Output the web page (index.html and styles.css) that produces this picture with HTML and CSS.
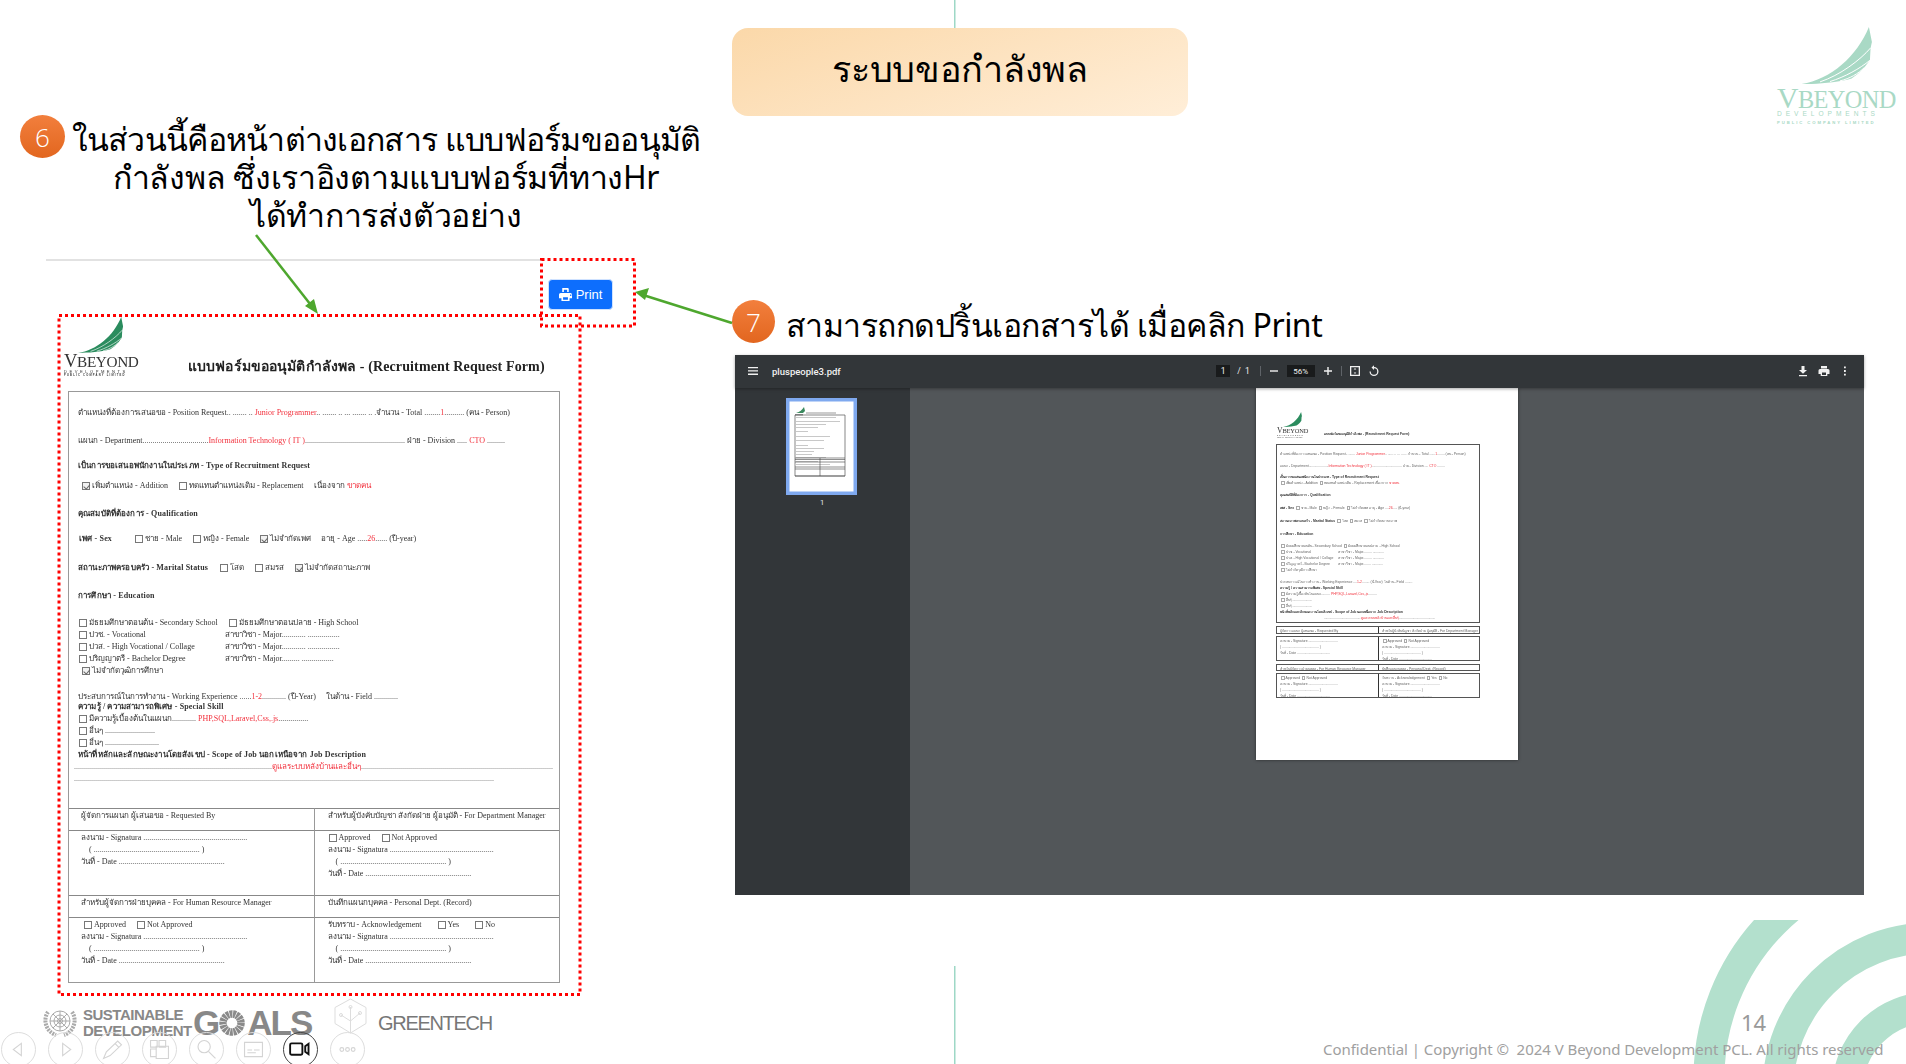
FILE: index.html
```html
<!DOCTYPE html>
<html lang="th">
<head>
<meta charset="utf-8">
<title>ระบบขอกำลังพล</title>
<link rel="stylesheet" href="styles.css">
</head>
<body>
<main class="slide">
  <svg class="arcs" viewBox="0 0 1906 1064" aria-hidden="true">
    <defs><clipPath id="arcclip"><rect x="1600" y="920" width="306" height="144"/></clipPath></defs>
    <g clip-path="url(#arcclip)" fill="none" stroke="#b3e0cd" stroke-width="31">
      <circle cx="1930" cy="1078" r="221"/>
      <circle cx="1930" cy="1090" r="152"/>
      <circle cx="1930" cy="1090" r="82.500"/>
    </g>
    <rect x="954" y="0" width="1.500" height="28" fill="#9ed8c6"/>
    <rect x="954" y="966" width="1.500" height="98" fill="#9ed8c6"/>
  </svg>

  <h1 class="title">ระบบขอกำลังพล</h1>

  <div class="logo logo-corner">
    <svg class="wing" viewBox="150 50 216 172"><path d="M150 222C240 210 320 140 357 50L366 95L362 113L360 150L343 172L325 190L305 205C260 218 200 222 150 222Z"/><path class="feather" d="M210 215C270 195 330 150 362 113M240 214C285 200 330 175 360 150M270 212C300 205 325 190 343 172"/></svg>
    <div class="logo-name">V<span>BEYOND</span></div>
    <div class="logo-dev">DEVELOPMENTS</div>
    <div class="logo-pcl">PUBLIC COMPANY LIMITED</div>
  </div>

  <div class="badge badge-6">6</div>
  <p class="note note-6"><span class="l1">ในส่วนนี้คือหน้าต่างเอกสาร แบบฟอร์มขออนุมัติ</span><span class="l2">กำลังพล ซึ่งเราอิงตามแบบฟอร์มที่ทางHr</span><span class="l3">ได้ทำการส่งตัวอย่าง</span></p>

  <div class="badge badge-7">7</div>
  <p class="note note-7">สามารถกดปริ้นเอกสารได้ เมื่อคลิก Print</p>

  <div class="rule"></div>
  <button class="print-btn">
    <svg viewBox="0 0 512 512"><path fill="#fff" d="M128 0h228l28 28v132h-64V64H192v96h-64V0zM64 192h384a64 64 0 0 1 64 64v144h-96v112H96V400H0V256a64 64 0 0 1 64-64zm96 208v64h192v-96H160v32zm272-116a28 28 0 1 0 0-1z"/></svg>
    <span>Print</span>
  </button>

  <section class="doc">
    <header class="doc-head">
      <div class="logo logo-form">
        <svg class="wing" viewBox="150 50 216 172"><path d="M150 222C240 210 320 140 357 50L366 95L362 113L360 150L343 172L325 190L305 205C260 218 200 222 150 222Z"/><path class="feather" d="M210 215C270 195 330 150 362 113M240 214C285 200 330 175 360 150M270 212C300 205 325 190 343 172"/></svg>
        <div class="logo-name">V<span>BEYOND</span></div>
        <div class="logo-dev">DEVELOPMENTS</div>
        <div class="logo-pcl">PUBLIC COMPANY LIMITED</div>
      </div>
      <h2 class="doc-title">แบบฟอร์มขออนุมัติกำลังพล - (Recruitment Request Form)</h2>
    </header>
    <div class="sheet">
      <div class="fields">
        <div class="row">ตำแหน่งที่ต้องการเสนอขอ - Position Request.. ....... .. <em>Junior Programmer</em>.. ....... .. ... ....... .. .จำนวน - Total ........<em>1</em>.......... (คน - Person)</div>
        <div class="row gap-16">แผนก - Department.................................<em>Information Technology ( IT )</em>.................................................. ฝ่าย - Division ..... <em>CTO</em> .........</div>
        <div class="row gap-13"><b>เป็นการขอเสนอพนักงานในประเภท - Type of Recruitment Request</b></div>
        <div class="row gap-8 indent"><i class="cb on"></i>เพิ่มตำแหน่ง - Addition <i class="cb wide"></i>ทดแทนตำแหน่งเดิม - Replacement <span class="sp"></span>เนื่องจาก <em>ขาดคน</em></div>
        <div class="row gap-16"><b>คุณสมบัติที่ต้องการ - Qualification</b></div>
        <div class="row gap-13"><b class="sex">เพศ - Sex</b><i class="cb"></i>ชาย - Male <i class="cb wide"></i>หญิง - Female <i class="cb wide on"></i>ไม่จำกัดเพศ <span class="sp"></span>อายุ - Age .....<em>26</em>...... (ปี-year)</div>
        <div class="row gap-17"><b class="marital">สถานะภาพครอบครัว - Marital Status</b><i class="cb wide"></i>โสด <i class="cb wide"></i>สมรส <i class="cb wide on"></i>ไม่จำกัดสถานะภาพ</div>
        <div class="row gap-16"><b>การศึกษา - Education</b></div>
        <div class="row gap-15 tight"><i class="cb"></i>มัธยมศึกษาตอนต้น - Secondary School <i class="cb wide"></i>มัธยมศึกษาตอนปลาย - High School</div>
        <div class="row tight edu"><span class="edu-a"><i class="cb"></i>ปวช. - Vocational</span>สาขาวิชา - Major............ ................</div>
        <div class="row tight edu"><span class="edu-a"><i class="cb"></i>ปวส. - High Vocational / Collage</span>สาขาวิชา - Major............ ................</div>
        <div class="row tight edu"><span class="edu-a"><i class="cb"></i>ปริญญาตรี - Bachelor Degree</span>สาขาวิชา - Major......... ................</div>
        <div class="row indent"><i class="cb on"></i>ไม่จำกัดวุฒิการศึกษา</div>
        <div class="row gap-14">ประสบการณ์ในการทำงาน - Working Experience ......<em>1-2</em>............ (ปี-Year) <span class="sp"></span>ในด้าน - Field ............</div>
        <div class="row pull-2"><b>ความรู้ / ความสามารถพิเศษ - Special Skill</b></div>
        <div class="row tight"><i class="cb"></i>มีความรู้เบื้องต้นในแผนก............ <em>PHP,SQL,Laravel,Css,.js</em>...............</div>
        <div class="row tight"><i class="cb"></i>อื่นๆ .........................</div>
        <div class="row tight"><i class="cb"></i>อื่นๆ ...........................</div>
        <div class="row"><b>หน้าที่หลักและลักษณะงานโดยสังเขป - Scope of Job นอกเหนือจาก Job Description</b></div>
        <div class="row dots">...................................................................................................<em>ดูแลระบบหลังบ้านและอื่นๆ</em>................................................................................................</div>
        <div class="row dots">..................................................................................................................................................................................................................</div>
      </div>
      <div class="signs">
        <div class="cell head"><span>ผู้จัดการแผนก ผู้เสนอขอ - Requested By</span></div>
        <div class="cell head right"><span>สำหรับผู้บังคับบัญชา สังกัดฝ่าย ผู้อนุมัติ - For Department Manager</span></div>
        <div class="cell body">
          <div>ลงนาม - Signatura ....................................................</div>
          <div class="paren">( ..................................................... )</div>
          <div>วันที่ - Date .....................................................</div>
        </div>
        <div class="cell body right">
          <div><i class="cb"></i>Approved <i class="cb wide"></i>Not Approved</div>
          <div>ลงนาม - Signatura ....................................................</div>
          <div class="paren">( ..................................................... )</div>
          <div>วันที่ - Date .....................................................</div>
        </div>
        <div class="cell head"><span>สำหรับผู้จัดการฝ่ายบุคคล - For Human Resource Manager</span></div>
        <div class="cell head right"><span>บันทึกแผนกบุคคล - Personal Dept. (Record)</span></div>
        <div class="cell body">
          <div class="opts"><i class="cb"></i>Approved <i class="cb wide"></i>Not Approved</div>
          <div>ลงนาม - Signatura ....................................................</div>
          <div class="paren">( ..................................................... )</div>
          <div>วันที่ - Date .....................................................</div>
        </div>
        <div class="cell body right">
          <div>รับทราบ - Acknowledgement <i class="cb wider"></i>Yes <i class="cb wider"></i>No</div>
          <div>ลงนาม - Signatura ....................................................</div>
          <div class="paren">( ..................................................... )</div>
          <div>วันที่ - Date .....................................................</div>
        </div>
      </div>
    </div>
  </section>

  <section class="viewer">
    <div class="vbar">
      <div class="vleft">
        <svg class="vi" viewBox="0 0 12 12"><path d="M1 2h10v1.300H1zM1 5.300h10v1.300H1zM1 8.600h10v1.300H1z"/></svg>
        <span class="vname">pluspeople3.pdf</span>
      </div>
      <div class="vcenter">
        <span class="vbox vpage">1</span><span class="vof">/ &nbsp;1</span>
        <i class="vsep"></i>
        <svg class="vi" viewBox="0 0 12 12"><path d="M2 5.300h8v1.400H2z"/></svg>
        <span class="vbox vzoom">56%</span>
        <svg class="vi" viewBox="0 0 12 12"><path d="M2 5.300h3.300V2h1.400v3.300H10v1.400H6.700V10H5.300V6.700H2z"/></svg>
        <i class="vsep"></i>
        <svg class="vi" viewBox="0 0 12 12"><path fill-rule="evenodd" d="M1 1h10v10H1zM2.300 2.300v7.400h7.400V2.300zM6 3L7.300 4.600H4.700zM6 9L4.700 7.400h2.600z"/></svg>
        <svg class="vi" viewBox="0 0 12 12"><path fill-rule="evenodd" d="M6 2a4.500 4.500 0 1 1-4.500 4.500h1.300A3.200 3.200 0 1 0 6 3.300V5L3.500 2.600 6 .3z"/></svg>
      </div>
      <div class="vright">
        <svg class="vi" viewBox="0 0 12 12"><path d="M4.500 1h3v4H10L6 8.800 2 5h2.500zM2 10h8v1.300H2z"/></svg>
        <svg class="vi" viewBox="0 0 12 12"><path fill-rule="evenodd" d="M3 1h6v2.500H3zM2 4h8a1.500 1.500 0 0 1 1.500 1.500V9H9.300v2H2.700V9H.5V5.500A1.500 1.500 0 0 1 2 4zM4 7.500V10h4V7.500z"/></svg>
        <svg class="vi" viewBox="0 0 12 12"><path d="M5 1.500h1.800v1.800H5zM5 5.100h1.800v1.800H5zM5 8.700h1.800v1.800H5z"/></svg>
      </div>
    </div>
    <div class="vbody">
      <aside class="vside">
        <svg class="thumb" viewBox="0 0 71 97" aria-hidden="true">
          <rect x="0" y="0" width="71" height="97" fill="#7fa9ef"/>
          <rect x="3.500" y="3.500" width="64" height="90" fill="#fff"/>
          <path d="M10 15c4-1 6-3 8-6l1 4-2 2z" fill="#3b8a5f"/>
          <path d="M9 16h8v1.500H9zM20 14.500h30v1H20z" fill="#999"/>
          <path d="M9 17v61h50V17z" fill="none" stroke="#555" stroke-width=".7"/>
          <g fill="#bbb">
            <rect x="10" y="19" width="40" height=".8"/><rect x="10" y="23" width="44" height=".8"/><rect x="10" y="26" width="30" height=".8"/><rect x="10" y="29" width="22" height=".8"/><rect x="10" y="33" width="12" height=".8"/><rect x="10" y="38" width="34" height=".8"/><rect x="10" y="42" width="28" height=".8"/><rect x="10" y="47" width="12" height=".8"/><rect x="10" y="50" width="28" height=".8"/><rect x="10" y="53" width="18" height=".8"/><rect x="10" y="56" width="16" height=".8"/><rect x="10" y="59" width="30" height=".8"/><rect x="10" y="63" width="22" height=".8"/><rect x="10" y="66" width="34" height=".8"/>
          </g>
          <path d="M9 60h50M9 61.500h50M9 64h50M9 69h50M9 71h50M9 78h50M34 60v18" stroke="#444" stroke-width=".6" fill="none"/>
        </svg>
        <span class="thumb-num">1</span>
      </aside>
      <div class="vmain">
        <article class="page">
          <header class="mini-head">
            <div class="logo logo-mini">
              <svg class="wing" viewBox="150 50 216 172"><path d="M150 222C240 210 320 140 357 50L366 95L362 113L360 150L343 172L325 190L305 205C260 218 200 222 150 222Z"/></svg>
              <div class="logo-name">V<span>BEYOND</span></div>
              <div class="logo-dev">DEVELOPMENTS</div>
              <div class="logo-pcl">PUBLIC COMPANY LIMITED</div>
            </div>
            <span class="mini-title">แบบฟอร์มขออนุมัติกำลังพล - (Recruitment Request Form)</span>
          </header>
          <div class="mini-sheet">
            <div class="m">ตำแหน่งที่ต้องการเสนอขอ - Position Request.. ....... <em>Junior Programmer</em>.. ...... .. ... ..... . จำนวน - Total ......<em>1</em>........ (คน - Person)</div>
            <div class="m mg-6">แผนก - Department.....................<em>Information Technology ( IT )</em>................................ ฝ่าย - Division .... <em>CTO</em> ........</div>
            <div class="m mg-5"><b>เป็นการขอเสนอพนักงานในประเภท - Type of Recruitment Request</b></div>
            <div class="m mg-1"><i class="mcb"></i>เพิ่มตำแหน่ง - Addition <i class="mcb"></i>ทดแทนตำแหน่งเดิม - Replacement เนื่องจาก <em>ขาดคน</em></div>
            <div class="m mg-6"><b>คุณสมบัติที่ต้องการ - Qualification</b></div>
            <div class="m mg-7"><b>เพศ - Sex</b> <i class="mcb"></i>ชาย - Male <i class="mcb"></i>หญิง - Female <i class="mcb"></i>ไม่จำกัดเพศ อายุ - Age ....<em>26</em>..... (ปี-year)</div>
            <div class="m mg-7"><b>สถานะภาพครอบครัว - Marital Status</b> <i class="mcb"></i>โสด <i class="mcb"></i>สมรส <i class="mcb"></i>ไม่จำกัดสถานะภาพ</div>
            <div class="m mg-7"><b>การศึกษา - Education</b></div>
            <div class="m mg-6"><i class="mcb"></i>มัธยมศึกษาตอนต้น - Secondary School <i class="mcb"></i>มัธยมศึกษาตอนปลาย - High School</div>
            <div class="m medu"><span><i class="mcb"></i>ปวช. - Vocational</span>สาขาวิชา - Major......... ............</div>
            <div class="m medu"><span><i class="mcb"></i>ปวส. - High Vocational / Collage</span>สาขาวิชา - Major......... ............</div>
            <div class="m medu"><span><i class="mcb"></i>ปริญญาตรี - Bachelor Degree</span>สาขาวิชา - Major........ ............</div>
            <div class="m"><i class="mcb"></i>ไม่จำกัดวุฒิการศึกษา</div>
            <div class="m mg-6">ประสบการณ์ในการทำงาน - Working Experience ....<em>1-2</em>........ (ปี-Year) ในด้าน - Field ........</div>
            <div class="m"><b>ความรู้ / ความสามารถพิเศษ - Special Skill</b></div>
            <div class="m"><i class="mcb"></i>มีความรู้เบื้องต้นในแผนก.......... <em>PHP,SQL,Laravel,Css,.js</em>.........</div>
            <div class="m"><i class="mcb"></i>อื่นๆ .....................</div>
            <div class="m"><i class="mcb"></i>อื่นๆ .....................</div>
            <div class="m"><b>หน้าที่หลักและลักษณะงานโดยสังเขป - Scope of Job นอกเหนือจาก Job Description</b></div>
            <div class="m mcenter">.......................................<em>ดูแลระบบหลังบ้านและอื่นๆ</em>.......................................</div>
          </div>
          <div class="mini-grid mh-8">
            <div class="mc">ผู้จัดการแผนก ผู้เสนอขอ - Requested By</div>
            <div class="mc">สำหรับผู้บังคับบัญชา สังกัดฝ่าย ผู้อนุมัติ - For Department Manager</div>
          </div>
          <div class="mini-grid mh-25">
            <div class="mc">ลงนาม - Signature ...............................<br>( ....................................... )<br>วันที่ - Date ...................................</div>
            <div class="mc"><i class="mcb"></i>Approved <i class="mcb"></i>Not Approved<br>ลงนาม - Signature ...............................<br>( ....................................... )<br>วันที่ - Date ...................................</div>
          </div>
          <div class="mini-grid mh-7">
            <div class="mc">สำหรับผู้จัดการฝ่ายบุคคล - For Human Resource Manager</div>
            <div class="mc">บันทึกแผนกบุคคล - Personal Dept. (Record)</div>
          </div>
          <div class="mini-grid mh-25">
            <div class="mc"><i class="mcb"></i>Approved <i class="mcb"></i>Not Approved<br>ลงนาม - Signature ...............................<br>( ....................................... )<br>วันที่ - Date ...................................</div>
            <div class="mc">รับทราบ - Acknowledgement <i class="mcb"></i>Yes <i class="mcb"></i>No<br>ลงนาม - Signature ...............................<br>( ....................................... )<br>วันที่ - Date ...................................</div>
          </div>
        </article>
      </div>
    </div>
  </section>

  <svg class="marks" viewBox="0 0 1906 1064" aria-hidden="true">
    <g fill="none" stroke="#f00" stroke-width="3" stroke-dasharray="3 3">
      <rect x="59" y="315.500" width="521" height="679"/>
      <rect x="541.500" y="259.500" width="93" height="66.500"/>
    </g>
    <g stroke="#4ea72e" stroke-width="2.500" fill="#4ea72e">
      <path d="M256 235L314 309" fill="none"/>
      <path d="M318 314L305 306L314 299Z" stroke="none"/>
      <path d="M732 323L643 295" fill="none"/>
      <path d="M635 292L649 288L645 300Z" stroke="none"/>
    </g>
  </svg>

  <footer class="brands">
    <svg class="un" viewBox="0 0 36 30" aria-hidden="true">
      <g fill="none" stroke="#aaa">
        <circle cx="18" cy="14" r="10"/><circle cx="18" cy="14" r="6"/><circle cx="18" cy="14" r="2.500"/>
        <path d="M8 14h20M18 4v20M11 7l14 14M25 7L11 21"/>
        <path d="M6 5C1 12 3 24 14 28M30 5c5 7 3 19-8 23" stroke-width="4" stroke-dasharray="2 1"/>
      </g>
    </svg>
    <div class="sdg"><span>SUSTAINABLE</span><span>DEVELOPMENT</span></div>
    <div class="goals">G<svg class="wheel" viewBox="0 0 26 26" aria-hidden="true"><circle cx="13" cy="13" r="9" fill="none" stroke="#8a8a8a" stroke-width="7.500" stroke-dasharray="2.700 .62"/></svg>ALS</div>
    <svg class="hex" viewBox="0 0 33 36" aria-hidden="true">
      <g fill="none" stroke="#ddd">
        <path d="M16.500 1L32 9.500v16L16.500 35 1 25.500v-16z"/>
        <path d="M16.500 9v26M7 17l9.500 6L26 15"/>
        <circle cx="16.500" cy="9" r="1.500"/><circle cx="7" cy="17" r="1.500"/><circle cx="26" cy="15" r="1.500"/>
      </g>
    </svg>
    <div class="greentech">GREENTECH</div>
  </footer>

  <nav class="deck-nav">
    <button class="dn"><svg viewBox="0 0 35 35"><path d="M20.500 11L12 17.500 20.500 24z"/></svg></button>
    <button class="dn"><svg viewBox="0 0 35 35"><path d="M14.500 11L23 17.500 14.500 24z"/></svg></button>
    <button class="dn"><svg viewBox="0 0 35 35"><path d="M8 27l3-7L23 8.500l4 4L15 24zM20 11l4 4"/></svg></button>
    <button class="dn"><svg viewBox="0 0 35 35"><path d="M8 8h7v7H8zM17 8h7v7h-7zM8 17h6v8H8zM14 14h13v13H14z"/></svg></button>
    <button class="dn"><svg viewBox="0 0 35 35"><circle cx="15" cy="14.500" r="6.500"/><path d="M19.500 19.500L27 27"/></svg></button>
    <button class="dn"><svg viewBox="0 0 35 35"><path d="M8 10h19v15H8zM11 18h5M18 18h6M11 21h9"/></svg></button>
    <button class="dn dn-on"><svg viewBox="0 0 35 35"><rect x="6.500" y="11" width="13" height="12" rx="1.500"/><path d="M26 11.500v11l-3.500-2.500v-6z"/></svg></button>
    <button class="dn"><svg viewBox="0 0 35 35"><circle cx="11.500" cy="17.500" r="2"/><circle cx="17.500" cy="17.500" r="2"/><circle cx="23.500" cy="17.500" r="2"/></svg></button>
  </nav>

  <span class="page-no">14</span>
  <p class="copyright">Confidential | Copyright © &nbsp;2024 V Beyond Development PCL. All rights reserved</p>
</main>
</body>
</html>
```

FILE: styles.css
```css
* { box-sizing: border-box; }
html, body { margin: 0; padding: 0; background: #fff; }
.slide {
  position: relative; width: 1906px; height: 1064px; overflow: hidden; background: #fff;
  font-family: "Noto Sans", "Open Sans", sans-serif; color: #000;
}
.arcs, .marks { position: absolute; left: 0; top: 0; width: 1906px; height: 1064px; pointer-events: none; }

.title {
  position: absolute; left: 732px; top: 28px; width: 456px; height: 88px; margin: 0; padding-bottom: 6px;
  display: flex; align-items: center; justify-content: center;
  border-radius: 16px; background: linear-gradient(160deg, #fbd8a9, #ffeed8);
  font-size: 36px; font-weight: 400; line-height: 1; letter-spacing: -.3px;
}

.logo { width: 10em; font-family: "Liberation Serif", serif; white-space: nowrap; line-height: 1; }
.logo .wing { display: block; width: 6.1em; height: 4.85em; margin-left: 1.95em; fill: currentColor; }
.logo .feather { fill: none; stroke: #fff; stroke-width: 3; }
.logo-name { font-size: 2.52em; margin-top: -.02em; letter-spacing: -.02em; }
.logo-name span { font-size: .82em; }
.logo-dev { font-family: "Liberation Sans", sans-serif; font-size: .56em; letter-spacing: .6em; margin-top: -.3em; }
.logo-pcl { font-family: "Liberation Sans", sans-serif; font-size: .36em; font-weight: 700; letter-spacing: .45em; margin-top: .6em; }
.logo-corner { position: absolute; left: 1777px; top: 27px; font-size: 11.8px; color: #a9d9c5; }
.logo-form { font-size: 7.4px; color: #2b8c5e; flex: none; }
.logo-form .logo-name, .logo-form .logo-dev, .logo-form .logo-pcl { color: #333; }
.logo-mini { font-size: 3.1px; color: #2b8c5e; flex: none; }
.logo-mini .logo-name, .logo-mini .logo-dev, .logo-mini .logo-pcl { color: #333; }

.badge {
  position: absolute; display: flex; align-items: center; justify-content: center;
  border-radius: 50%; color: #fff; font-size: 26px; font-weight: 300;
  font-family: "Open Sans", sans-serif;
  background: linear-gradient(180deg, #f27f3d, #e2661f);
}
.badge-6 { left: 20px; top: 115px; width: 45px; height: 43px; }
.badge-7 { left: 732px; top: 300px; width: 43px; height: 43px; }

.note { position: absolute; margin: 0; font-size: 32px; line-height: 38px; color: #000; white-space: nowrap; }
.note-6 { left: 62px; top: 120px; width: 648px; text-align: center; }
.note-6 span { display: block; }
.l1 { letter-spacing: -.72px; }
.l2 { letter-spacing: -.3px; }
.l3 { letter-spacing: -.4px; }
.note-7 { left: 786px; top: 306px; letter-spacing: -.52px; }

.rule { position: absolute; left: 46px; top: 259px; width: 496px; height: 2px; background: #e2e2e2; }

.print-btn {
  position: absolute; left: 548px; top: 279px; width: 65px; height: 31px;
  display: flex; align-items: center; justify-content: center; gap: 4px; padding: 0;
  border: 1px solid #cfe2ff; border-radius: 4px; background: #0d6efd; color: #fff;
  font: 13px "Liberation Sans", sans-serif;
}
.print-btn svg { width: 13px; height: 13px; }

.doc { position: absolute; left: 64px; top: 319px; width: 496px; height: 663px; font: 8px/12px "Liberation Serif", "Noto Sans", serif; color: #333; filter: blur(.3px); }
.doc-head { display: flex; align-items: flex-end; gap: 50px; height: 59px; }
.doc-title { margin: 0 0 3px; font-size: 14px; line-height: 16px; font-weight: 700; letter-spacing: .12px; white-space: nowrap; color: #222; }
.sheet { margin: 13px 0 0 4px; width: 492px; height: 592px; border: 1.500px solid #999; display: flex; flex-direction: column; }
.fields { flex: none; height: 416px; padding: 15px 0 0 9px; }
.row { height: 12px; white-space: nowrap; }
.row b { letter-spacing: .15px; }
.row em, .m em { font-style: normal; color: #f2303c; }
.gap-8 { margin-top: 8px; } .gap-13 { margin-top: 13px; } .gap-14 { margin-top: 14px; } .gap-15 { margin-top: 15px; } .gap-16 { margin-top: 16px; } .gap-17 { margin-top: 17px; }
.pull-2 { margin-top: -2px; }
.indent { padding-left: 3px; }
.tight .cb:first-child, .edu .cb:first-child { margin-left: 1px; }
.sp { display: inline-block; width: 8px; }
.sex { display: inline-block; width: 56px; padding-left: 1px; }
.marital { display: inline-block; width: 133px; }
.edu-a { display: inline-block; width: 147px; }
.dots { margin-left: -4px; color: #555; }
.cb { display: inline-block; width: 8px; height: 8px; margin: 0 2px 0 1px; vertical-align: -1.500px; border: 1px solid #777; background: #fff; position: relative; }
.cb.wide { margin-left: 9px; }
.cb.wider { margin-left: 14px; }
.cb.on { background: #f2f2f2; }
.cb.on::after { content: ""; position: absolute; left: 2px; top: 0; width: 2.500px; height: 4.500px; border: solid #666; border-width: 0 1px 1px 0; transform: rotate(40deg); }

.signs { display: grid; flex: 1; grid-template-columns: 244.500px 1fr; grid-template-rows: 22px 65px 22px 1fr; }
.cell { border-top: 1.500px solid #888; padding: 1px 0 0 12px; white-space: nowrap; }
.cell.right { border-left: 1px solid #999; padding-left: 13px; }
.paren { padding-left: 8px; }
.opts { padding-left: 2px; }

.viewer { position: absolute; left: 735px; top: 355px; width: 1129px; height: 540px; display: flex; flex-direction: column; background: #525659; font-family: Roboto, sans-serif; }
.vbar { flex: none; height: 33px; display: grid; grid-template-columns: 1fr auto 1fr; align-items: center; padding: 0 13px 1px 12px; background: #323639; color: #f1f1f1; box-shadow: 0 1px 3px rgba(0,0,0,.35); position: relative; z-index: 1; }
.vleft { display: flex; align-items: center; gap: 13px; }
.vname { font-size: 9.500px; font-weight: 500; }
.vcenter { display: flex; align-items: center; gap: 7px; font-size: 8.500px; margin-left: -2px; }
.vright { display: flex; align-items: center; justify-content: flex-end; gap: 9px; }
.vi { width: 12px; height: 12px; fill: #f1f1f1; flex: none; }
.vbox { display: flex; align-items: center; justify-content: center; height: 12px; background: #191b1c; }
.vpage { width: 14px; }
.vzoom { width: 28px; font-size: 8px; }
.vof { margin-right: 3px; }
.vsep { width: 1px; height: 10px; background: #5f6368; }
.vbody { flex: 1; display: flex; min-height: 0; }
.vside { flex: none; width: 175px; padding-top: 10px; display: flex; flex-direction: column; align-items: center; background: #323639; }
.thumb { display: block; width: 71px; height: 97px; margin-left: -2px; }
.thumb-num { margin-top: 3px; color: #e8eaed; font-size: 7.500px; line-height: 10px; margin-left: -1px; }
.vmain { flex: 1; display: flex; justify-content: center; align-items: flex-start; }

.page { width: 262px; height: 372px; padding: 24px 0 0 20px; background: #fff; font: 3.400px/6px "Liberation Sans", "Noto Sans", sans-serif; color: #666; box-shadow: 0 0 3px rgba(0,0,0,.5); filter: blur(.25px); }
.mini-head { display: flex; align-items: flex-end; gap: 16px; height: 26px; padding-left: 1px; }
.mini-title { font-size: 3.300px; font-weight: 700; line-height: 6px; margin-bottom: 1px; white-space: nowrap; color: #333; }
.mini-sheet { margin-top: 6px; width: 204px; height: 179px; padding: 5.500px 0 0 3px; border: 1px solid #555; white-space: nowrap; }
.m { height: 6px; }
.m b { color: #333; }
.mg-1 { margin-top: .5px; } .mg-5 { margin-top: 5px; } .mg-6 { margin-top: 6px; } .mg-7 { margin-top: 7px; }
.medu span { display: inline-block; width: 58px; }
.mcenter { text-align: center; }
.mcb { display: inline-block; width: 3.500px; height: 3.500px; margin: 0 1px; border: .5px solid #aaa; vertical-align: -.5px; }
.mini-grid { display: grid; grid-template-columns: 101px 103px; width: 204px; margin-top: 2.500px; border: 1px solid #555; white-space: nowrap; }
.mc { padding: 1px 0 0 3px; line-height: 6px; overflow: hidden; }
.mc + .mc { border-left: 1px solid #333; }
.mh-8 { height: 8px; } .mh-7 { height: 7px; } .mh-25 { height: 25px; }

.brands { position: absolute; left: 42px; top: 998px; display: flex; align-items: flex-start; color: #888; font-family: "Liberation Sans", sans-serif; }
.un { width: 36px; height: 30px; margin-top: 9px; flex: none; }
.sdg { display: flex; flex-direction: column; margin: 9px 0 0 5px; width: 110px; font-size: 15px; line-height: 16px; font-weight: 700; letter-spacing: -.5px; }
.goals { display: flex; align-items: center; width: 117px; height: 36px; margin: 7px 0 0 0; font-size: 35px; font-weight: 700; letter-spacing: -2px; }
.wheel { width: 26px; height: 26px; margin: 0 2px 0 1px; flex: none; }
.hex { width: 33px; height: 36px; margin-left: 24px; flex: none; }
.greentech { margin: 15px 0 0 11px; font-size: 20px; line-height: 20px; letter-spacing: -1.3px; color: #777; }

.deck-nav { position: absolute; left: 1px; top: 1032px; display: flex; gap: 12px; }
.dn { width: 35px; height: 35px; padding: 0; border: 1px solid #ddd; border-radius: 50%; background: transparent; }
.dn svg { display: block; width: 33px; height: 33px; fill: none; stroke: #d4d4d4; stroke-width: 1.200; }
.dn-on { border-color: #444; }
.dn-on svg { stroke: #111; stroke-width: 2; }

.page-no { position: absolute; left: 1741px; top: 1009px; font-size: 22px; line-height: 26px; color: #999; }
.copyright { position: absolute; left: 1323px; top: 1039px; margin: 0; font-size: 15px; line-height: 20px; color: #a0a0a0; white-space: nowrap; letter-spacing: -.04px; }
```
